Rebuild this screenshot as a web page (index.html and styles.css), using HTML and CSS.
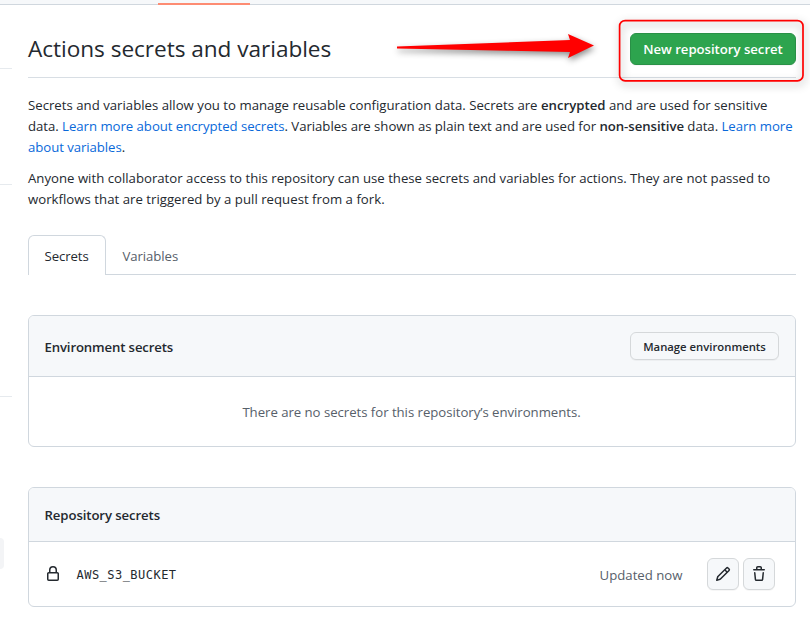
FILE: index.html
```html
<!DOCTYPE html>
<html lang="en">
<head>
<meta charset="utf-8">
<title>Actions secrets and variables</title>
<link rel="stylesheet" href="styles.css">
</head>
<body>
<div class="topbar"><div class="topbar-active"></div></div>
<div class="layout">
  <aside class="sidebar">
    <div class="rule rule-a"></div>
    <div class="rule rule-b"></div>
    <div class="rule rule-c"></div>
    <div class="nav-item"></div>
  </aside>
  <main class="main">
    <header class="subhead">
      <h1 class="title">Actions secrets and variables</h1>
      <button class="btn btn-primary"><span>New repository secret</span></button>
    </header>
    <div class="intro">
      <p><span class="l1">Secrets and variables allow you to manage reusable configuration data. Secrets are <strong>encrypted</strong> and are used for sensitive</span><br><span class="l2">data. <a>Learn more about encrypted secrets</a>. Variables are shown as plain text and are used for <strong>non-sensitive</strong> data. <a>Learn more</a></span><br><span class="l3"><a>about variables</a>.</span></p>
      <p><span class="l4">Anyone with collaborator access to this repository can use these secrets and variables for actions. They are not passed to</span><br><span class="l5">workflows that are triggered by a pull request from a fork.</span></p>
    </div>
    <nav class="tabs">
      <a class="tab tab-selected">Secrets</a>
      <a class="tab">Variables</a>
    </nav>
    <section class="box">
      <div class="box-header box-header-tall">
        <h2 class="env-title">Environment secrets</h2>
        <button class="btn btn-small"><span>Manage environments</span></button>
      </div>
      <div class="blank"><span>There are no secrets for this repository’s environments.</span></div>
    </section>
    <section class="box">
      <div class="box-header">
        <h2 class="repo-title">Repository secrets</h2>
      </div>
      <div class="row">
        <svg class="lock" width="16" height="16" viewBox="0 0 16 16"><path d="M4 4a4 4 0 0 1 8 0v2h.25c.966 0 1.75.784 1.75 1.75v5.5A1.75 1.75 0 0 1 12.25 15h-8.5A1.75 1.75 0 0 1 2 13.25v-5.5C2 6.784 2.784 6 3.75 6H4Zm8.25 3.5h-8.5a.25.25 0 0 0-.25.25v5.5c0 .138.112.25.25.25h8.5a.25.25 0 0 0 .25-.25v-5.5a.25.25 0 0 0-.25-.25ZM10.5 6V4a2.5 2.5 0 1 0-5 0v2Z"/></svg>
        <code class="name">AWS_S3_BUCKET</code>
        <span class="updated">Updated now</span>
        <button class="btn btn-icon"><svg width="16" height="16" viewBox="0 0 16 16"><path d="M11.013 1.427a1.75 1.75 0 0 1 2.474 0l1.086 1.086a1.75 1.75 0 0 1 0 2.474l-8.61 8.61c-.21.21-.47.364-.756.445l-3.251.93a.75.75 0 0 1-.927-.928l.929-3.25c.081-.286.235-.547.445-.758l8.61-8.61Zm.176 4.823L9.75 4.81l-6.286 6.287a.253.253 0 0 0-.064.108l-.558 1.953 1.953-.558a.253.253 0 0 0 .108-.064Zm1.238-3.763a.25.25 0 0 0-.354 0L10.811 3.75l1.439 1.44 1.263-1.263a.25.25 0 0 0 0-.354Z"/></svg></button>
        <button class="btn btn-icon"><svg width="16" height="16" viewBox="0 0 16 16"><path d="M11 1.75V3h2.25a.75.75 0 0 1 0 1.5H2.75a.75.75 0 0 1 0-1.5H5V1.75C5 .784 5.784 0 6.75 0h2.5C10.216 0 11 .784 11 1.75ZM4.496 6.675l.66 6.6a.25.25 0 0 0 .249.225h5.19a.25.25 0 0 0 .249-.225l.66-6.6a.75.75 0 0 1 1.492.149l-.66 6.6A1.748 1.748 0 0 1 10.595 15h-5.19a1.75 1.75 0 0 1-1.741-1.575l-.66-6.6a.75.75 0 1 1 1.492-.15ZM6.5 1.75V3h3V1.75a.25.25 0 0 0-.25-.25h-2.5a.25.25 0 0 0-.25.25Z"/></svg></button>
      </div>
    </section>
  </main>
</div>
<svg class="arrow" width="220" height="50" viewBox="390 20 220 50"><path d="M397 46.4 L570 40 L568 34 L594 45.5 L568 58 L570 52 L397 48.6 Z"/></svg>
<svg class="highlight" width="205" height="85" viewBox="610 10 205 85"><rect x="619.6" y="20.6" width="183.4" height="60.2" rx="5.5"/></svg>
</body>
</html>
```

FILE: styles.css
```css
* { box-sizing: border-box; }
body {
  margin: 0;
  width: 810px;
  height: 622px;
  overflow: hidden;
  background: #fff;
  color: #24292f;
  font: 13.2px/21px "Open Sans", "Noto Sans", sans-serif;
  white-space: nowrap;
}
h1, h2, p { margin: 0; }
a { color: #0969da; text-decoration: none; }
strong { font-weight: 600; }
.topbar { height: 5px; background: #f6f8fa; border-bottom: 1px solid #d0d7de; padding: 3px 0 0 158px; }
.topbar-active { width: 92px; height: 2px; background: #fd8c73; }
.layout { display: flex; gap: 16px; }
.sidebar { width: 12px; }
.rule { height: 1px; background: #e6eaee; }
.rule-a { margin-top: 63px; }
.rule-b { margin-top: 115px; }
.rule-c { margin-top: 211px; }
.nav-item { margin-top: 141px; width: 4px; height: 31px; background: #f3f4f6; border-radius: 0 5px 5px 0; }
.main { width: 768px; padding-top: 28px; }
.subhead { display: flex; justify-content: space-between; height: 45px; border-bottom: 1px solid #d8dee4; }
.title { font-size: 22.6px; font-weight: 400; line-height: 32px; letter-spacing: -.035px; }
.btn {
  font: 600 13.2px/20px "Open Sans", sans-serif;
  display: flex; align-items: center; justify-content: center;
  padding: 0; border: 1px solid #d5d8da; border-radius: 6px;
  background: #f6f8fa; color: #24292f;
  box-shadow: 0 1px 0 rgba(27,31,36,.04);
}
.btn svg, .lock { fill: #24292f; }
.btn-primary { width: 166px; height: 32px; background: #2da44e; border-color: #2a9147; color: #fff; letter-spacing: -.03px; }
.btn-small { width: 149px; height: 28px; padding-top: 1px; font-size: 11.3px; }
.btn-icon { width: 32px; height: 32px; margin-left: 4px; }
.intro { padding-top: 17px; }
.intro p + p { margin-top: 10px; }
.l1 { letter-spacing: .006px; }
.l2 { letter-spacing: -.038px; }
.l3 { letter-spacing: -.06px; }
.l5 { letter-spacing: .02px; }
.tabs { display: flex; height: 40px; margin-top: 25px; border-bottom: 1px solid #d0d7de; }
.tab { height: 40px; padding: 10px 15.5px; border: 1px solid transparent; border-bottom: 0; color: #57606a; letter-spacing: -.08px; }
.tab-selected { width: 78px; background: #fff; border-color: #d0d7de; border-radius: 6px 6px 0 0; color: #24292f; }
.box { margin-top: 40px; border: 1px solid #d0d7de; border-radius: 6px; overflow: hidden; }
.box-header { display: flex; align-items: center; justify-content: space-between; height: 54px; padding: 0 16px 0 15.5px; background: #f6f8fa; border-bottom: 1px solid #d0d7de; }
.box-header-tall { height: 61px; }
.box h2 { padding-top: 2px; font-size: 13.2px; font-weight: 600; letter-spacing: -.1px; }
.box .env-title { letter-spacing: -.14px; }
.blank { height: 69px; padding: 2px 1px 0 0; display: flex; align-items: center; justify-content: center; color: #57606a; letter-spacing: -.035px; }
.row { display: flex; align-items: center; height: 64px; padding: 0 20px 0 16px; }
.name { margin-left: 15.5px; padding-top: 2px; font: 12px/18px "DejaVu Sans Mono", monospace; letter-spacing: .47px; }
.updated { margin-left: auto; margin-right: 20.5px; padding-top: 2px; color: #57606a; }
.arrow { position: absolute; left: 390px; top: 20px; fill: #f00; filter: drop-shadow(1px 3px 3px rgba(0,0,0,.45)); }
.highlight {
  position: absolute; left: 610px; top: 10px;
  fill: none; stroke: #f00; stroke-width: 1.7px;
  filter: drop-shadow(1px 3px 4px rgba(0,0,0,.4));
}
```
